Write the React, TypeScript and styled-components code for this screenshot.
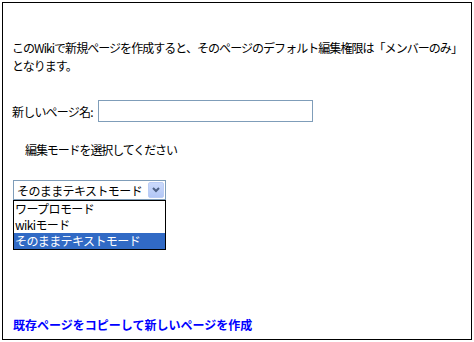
import React from 'react'
import styled, { createGlobalStyle } from 'styled-components'

const Global = createGlobalStyle`
  body {
    margin: 0;
    background: #fff;
    font-family: "Noto Sans CJK JP", "Noto Sans", sans-serif;
    font-size: 12px;
    color: #000;
  }
`

const Frame = styled.div`
  box-sizing: border-box;
  margin: 2px;
  width: 470px;
  height: 338px;
  border: 1px solid #000;
  padding: 0 9px 5px;
  display: flex;
  flex-direction: column;
`

const Intro = styled.p`
  margin: 36px 0 0;
  line-height: 18px;
  white-space: nowrap;
  letter-spacing: -0.95px;
`

const NameRow = styled.div`
  margin-top: 25px;
  display: flex;
  align-items: center;
  height: 22px;
`

const Label = styled.label`
  letter-spacing: -0.8px;
  margin-right: 5px;
`

const TextBox = styled.input`
  box-sizing: border-box;
  width: 215px;
  height: 22px;
  border: 1px solid #7f9db9;
  padding: 0 3px;
  outline: none;
`

const ModeLabel = styled.div`
  margin-top: 19px;
  padding-left: 13px;
  line-height: 18px;
  letter-spacing: -1.1px;
`

const Combo = styled.div`
  margin: 21px 0 0 1px;
  width: 153px;
`

const SelectBox = styled.div`
  box-sizing: border-box;
  height: 20px;
  border: 1px solid #7f9db9;
  display: flex;
  align-items: center;
  padding: 1px;
`

const SelectValue = styled.span`
  flex: 1;
  padding-left: 2px;
  letter-spacing: -0.6px;
  white-space: nowrap;
  overflow: hidden;
`

const ArrowButton = styled.span`
  width: 16px;
  height: 16px;
  box-sizing: border-box;
  border: 1px solid #bbcdf5;
  border-radius: 2px;
  background: linear-gradient(#cbdafc, #b3c7f6);
  display: flex;
  align-items: center;
  justify-content: center;
`

const List = styled.ul`
  margin: 0;
  padding: 0;
  list-style: none;
  border: 1px solid #000;
  box-sizing: border-box;
  height: 50px;
`

const Option = styled.li<{ $active?: boolean }>`
  height: 16px;
  line-height: 16px;
  padding-left: 1px;
  letter-spacing: -0.6px;
  white-space: nowrap;
  background: ${(p) => (p.$active ? '#316ac5' : '#fff')};
  color: ${(p) => (p.$active ? '#fff' : '#000')};
`

const CopyLink = styled.a`
  margin-top: auto;
  margin-left: 1px;
  line-height: 18px;
  font-weight: bold;
  color: #0000ff;
  text-decoration: none;
`

export default function App() {
  return (
    <>
      <Global />
      <Frame>
        <Intro>
          このWikiで新規ページを作成すると、そのページのデフォルト編集権限は「メンバーのみ」
          <br />
          となります。
        </Intro>
        <NameRow>
          <Label>新しいページ名:</Label>
          <TextBox type="text" />
        </NameRow>
        <ModeLabel>編集モードを選択してください</ModeLabel>
        <Combo>
          <SelectBox>
            <SelectValue>そのままテキストモード</SelectValue>
            <ArrowButton>
              <svg width="8" height="6" viewBox="0 0 8 6">
                <path d="M1 1 L4 4 L7 1" fill="none" stroke="#4d6185" strokeWidth="2" />
              </svg>
            </ArrowButton>
          </SelectBox>
          <List>
            <Option>ワープロモード</Option>
            <Option>wikiモード</Option>
            <Option $active>そのままテキストモード</Option>
          </List>
        </Combo>
        <CopyLink href="#">既存ページをコピーして新しいページを作成</CopyLink>
      </Frame>
    </>
  )
}
